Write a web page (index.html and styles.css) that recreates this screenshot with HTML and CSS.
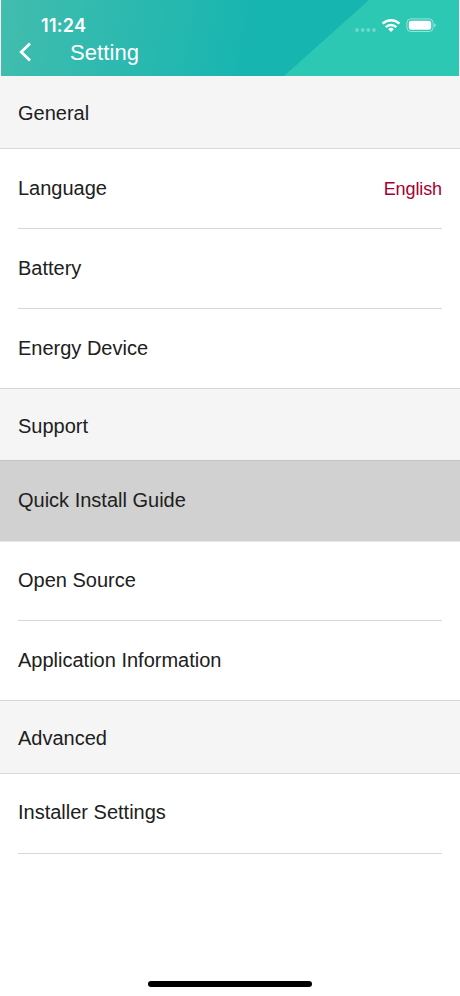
FILE: index.html
```html
<!DOCTYPE html>
<html lang="en">
<head>
<meta charset="utf-8">
<title>Setting</title>
<link rel="stylesheet" href="styles.css">
</head>
<body>
<main class="screen">
  <header class="header">
    <svg class="header-bg" viewBox="0 0 458 76" preserveAspectRatio="none" aria-hidden="true">
      <defs>
        <linearGradient id="teal" gradientUnits="userSpaceOnUse" x1="0" y1="0" x2="250" y2="50">
          <stop offset="0" stop-color="#42bdae"/>
          <stop offset="1" stop-color="#17b5b0"/>
        </linearGradient>
      </defs>
      <rect width="458" height="76" fill="url(#teal)"/>
      <path d="M368 0H458V76H283Z" fill="#2cc8b3"/>
    </svg>
    <div class="status">
      <span class="time">11:24</span>
      <svg class="indicators" viewBox="0 0 84 18" width="84" height="18" aria-hidden="true">
        <g fill="#fff" fill-opacity=".3">
          <circle cx="5" cy="13" r="1.9"/><circle cx="10.7" cy="13" r="1.9"/><circle cx="16.3" cy="13" r="1.9"/><circle cx="22" cy="13" r="1.9"/>
        </g>
        <g fill="none" stroke="#fff" stroke-width="2.5">
          <path d="M30.6 6.7a12 12 0 0 1 16.8 0"/>
          <path d="M33.7 10.1a7.6 7.6 0 0 1 10.6 0"/>
        </g>
        <path d="M36.2 12.2a4 4 0 0 1 5.6 0L39 15Z" fill="#fff"/>
        <rect x="54.9" y="1.9" width="26.2" height="12.6" rx="4" fill="none" stroke="#fff" stroke-opacity=".5"/>
        <rect x="56.8" y="3.7" width="22.4" height="9" rx="2.3" fill="#fff"/>
        <path d="M82.2 6.2q1.6.5 1.6 2t-1.6 2Z" fill="#fff" fill-opacity=".5"/>
      </svg>
    </div>
    <div class="nav">
      <svg class="back" viewBox="0 0 14 20" width="14" height="20" aria-hidden="true"><path d="M12 1.5 3.2 10l8.8 8.5" fill="none" stroke="#fff" stroke-width="2.7"/></svg>
      <h1 class="title">Setting</h1>
    </div>
  </header>

  <h2 class="section">General</h2>
  <ul class="list">
    <li class="row"><span>Language</span><span class="value">English</span></li>
    <li class="row">Battery</li>
    <li class="row">Energy Device</li>
  </ul>
  <h2 class="section compact">Support</h2>
  <ul class="list">
    <li class="row pressed">Quick Install Guide</li>
    <li class="row">Open Source</li>
    <li class="row">Application Information</li>
  </ul>
  <h2 class="section">Advanced</h2>
  <ul class="list">
    <li class="row last">Installer Settings</li>
  </ul>
  <div class="home-bar"></div>
</main>
</body>
</html>
```
FILE: styles.css
```css
* { box-sizing: border-box; }
body { margin: 0; background: #fff; }
.screen {
  width: 460px;
  height: 996px;
  display: flex;
  flex-direction: column;
  font-family: "Liberation Sans", Arial, sans-serif;
  font-size: 20px;
  color: #202020;
}
.header {
  position: relative;
  height: 76px;
  margin: 0 1px;
  padding-top: 14px;
  color: #fff;
}
.header-bg {
  position: absolute;
  inset: 0;
  width: 100%;
  height: 100%;
}
.status {
  position: relative;
  display: flex;
  justify-content: space-between;
  height: 24px;
  padding: 0 23px 0 40px;
}
.time {
  font: 600 18px/24px Inter, sans-serif;
  letter-spacing: 0.3px;
}
.indicators { margin-top: 3px; }
.nav {
  position: relative;
  display: flex;
  align-items: center;
  height: 28px;
  padding-left: 17px;
}
.title {
  margin: 2px 0 0 38px;
  font-size: 22px;
  font-weight: 400;
  line-height: 28px;
  letter-spacing: 0.1px;
}
.section {
  height: 73px;
  margin: 0;
  padding: 1px 18px 0;
  border-bottom: 1px solid #d9d9d9;
  background: #f5f5f5;
  font-size: 20px;
  font-weight: 400;
  line-height: 73px;
}
.compact {
  height: 72px;
}
.list {
  margin: 0;
  padding: 0;
  list-style: none;
}
.row {
  display: flex;
  justify-content: space-between;
  height: 80px;
  margin: 0 18px;
  border-bottom: 1px solid #d6d6d6;
  line-height: 78px;
}
.row:last-child:not(.last) {
  margin: 0;
  padding: 0 18px;
}
.last {
  line-height: 77px;
}
.value {
  font-size: 18px;
  line-height: 80px;
  letter-spacing: -0.1px;
  color: #a50034;
}
.pressed {
  height: 82px;
  margin: -1px 0;
  padding: 0 18px;
  border-top: 1px solid #c4c4c4;
  border-bottom-color: #e6e6e6;
  background: #d1d1d1;
}
.home-bar {
  width: 164px;
  height: 6px;
  margin: auto auto 9px;
  border-radius: 3px;
  background: #000;
}
```
